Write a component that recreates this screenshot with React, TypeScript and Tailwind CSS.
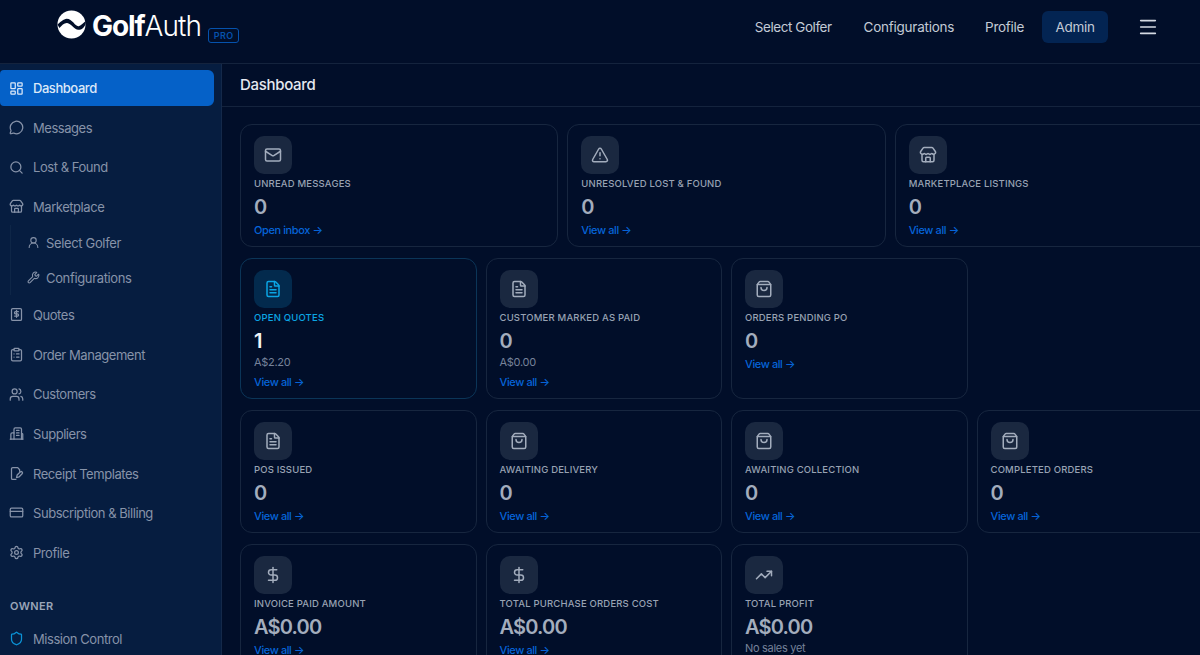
import { ReactNode } from "react";
import {
  CreditCard,
  DollarSign,
  FileText,
  ClipboardList,
  LayoutDashboard,
  Mail,
  Menu,
  MessageCircle,
  Search,
  Settings,
  Shield,
  ShoppingBag,
  Store,
  TrendingUp,
  TriangleAlert,
  UserRound,
  Users,
  Wrench,
} from "lucide-react";

const font = { fontFamily: "Inter, sans-serif" };

function QuoteIcon({ className }: { className?: string }) {
  return (
    <svg viewBox="0 0 24 24" fill="none" stroke="currentColor" strokeWidth="2" strokeLinecap="round" strokeLinejoin="round" className={className}>
      <rect x="4" y="2.5" width="16" height="19" rx="2" />
      <path d="M15 7.5h-4.5a1.75 1.75 0 0 0 0 3.5h3a1.75 1.75 0 0 1 0 3.5H9" />
      <path d="M12 5.5v11" />
    </svg>
  );
}

function SupplierIcon({ className }: { className?: string }) {
  return (
    <svg viewBox="0 0 24 24" fill="none" stroke="currentColor" strokeWidth="2" strokeLinecap="round" strokeLinejoin="round" className={className}>
      <path d="M8 21V5a2 2 0 0 1 2-2h8a2 2 0 0 1 2 2v16" />
      <path d="M8 11H5a2 2 0 0 0-2 2v8" />
      <path d="M20 12h1a1 1 0 0 1 1 1v8" />
      <path d="M2 21h20" />
      <path d="M12 7h4M12 11h4M12 15h4" />
    </svg>
  );
}

function ReceiptTemplateIcon({ className }: { className?: string }) {
  return (
    <svg viewBox="0 0 24 24" fill="none" stroke="currentColor" strokeWidth="2" strokeLinecap="round" strokeLinejoin="round" className={className}>
      <path d="M17 8.5V6l-3-3.5H6a2 2 0 0 0-2 2v15a2 2 0 0 0 2 2h5" />
      <path d="M21 12.5a2 2 0 0 0-3-3l-5 5-1 4 4-1z" />
    </svg>
  );
}

function Logo() {
  return (
    <svg viewBox="0 0 30 30" className="w-[29px] h-[29px] shrink-0">
      <circle cx="15" cy="15" r="14.5" fill="#ffffff" />
      <path d="M0.5 15 C3 13 7 9 10 9 C13 9 15 11 17 13 C19 15.5 21 17.5 23 16.5 C25 15.5 27 13.5 30 11 L29.5 15 C28 18 26 20.5 22 20.5 C18 20.5 14.5 14 10.5 13.5 C7.5 13.2 5 16 2.5 18.5 Z" fill="#010e29" />
    </svg>
  );
}

function NavItem({ icon, label, active }: { icon: ReactNode; label: string; active?: boolean }) {
  return (
    <div
      className={`h-9 w-[214px] flex items-center gap-[9px] pl-[9px] rounded-r-md rounded-l-sm text-[13px] mb-[3.6px] ${
        active ? "bg-[#0561c8] text-[#dce8f8] font-medium" : "text-[#8793a9]"
      }`}
    >
      {icon}
      <span className="mt-[2px] tracking-[-0.45px]">{label}</span>
    </div>
  );
}

const iconCls = "w-[15px] h-[15px] shrink-0";

function SubItem({ icon, label }: { icon: ReactNode; label: string }) {
  return (
    <div className="h-[35px] flex items-center gap-[6px] pl-[16px] text-[13px] text-[#8793a9]">
      {icon}
      <span className="mt-[2px] tracking-[-0.35px]">{label}</span>
    </div>
  );
}

function Sidebar() {
  return (
    <aside className="w-[222px] shrink-0 bg-[#061d40] border-r border-[#14294a] pt-1.5 overflow-hidden">
      <NavItem active icon={<LayoutDashboard className={iconCls} />} label="Dashboard" />
      <NavItem icon={<MessageCircle className={iconCls} />} label="Messages" />
      <NavItem icon={<Search className={iconCls} />} label="Lost & Found" />
      <NavItem icon={<Store className={iconCls} />} label="Marketplace" />
      <div className="ml-[10px] border-l border-[#0e2647] mb-[1.5px] -mt-[3px]">
        <SubItem icon={<UserRound className="w-[13px] h-[13px] shrink-0" />} label="Select Golfer" />
        <SubItem icon={<Wrench className="w-[13px] h-[13px] shrink-0" />} label="Configurations" />
      </div>
      <NavItem icon={<QuoteIcon className={iconCls} />} label="Quotes" />
      <NavItem icon={<ClipboardList className={iconCls} />} label="Order Management" />
      <NavItem icon={<Users className={iconCls} />} label="Customers" />
      <NavItem icon={<SupplierIcon className={iconCls} />} label="Suppliers" />
      <NavItem icon={<ReceiptTemplateIcon className={iconCls} />} label="Receipt Templates" />
      <NavItem icon={<CreditCard className={iconCls} />} label="Subscription & Billing" />
      <NavItem icon={<Settings className={iconCls} />} label="Profile" />
      <div className="pl-[10px] mt-[28px] mb-[6px] text-[11px] font-semibold tracking-[0.4px] text-[#9aa5b8]">OWNER</div>
      <NavItem icon={<Shield className={`${iconCls} text-[#0b93d6]`} />} label="Mission Control" />
    </aside>
  );
}

type CardProps = {
  icon: ReactNode;
  label: string;
  value: string;
  sub?: string;
  link?: string;
  highlight?: boolean;
};

function Card({ icon, label, value, sub, link, highlight }: CardProps) {
  return (
    <div className={`rounded-xl border px-[13px] pt-[11px] ${highlight ? "border-[#0b3558]" : "border-[#17263f]"}`}>
      <div
        className={`w-[38px] h-[38px] rounded-[10px] flex items-center justify-center ${
          highlight ? "bg-[#032a4d] text-[#0ba5e4]" : "bg-[#1a2840] text-[#a3adbd]"
        }`}
      >
        {icon}
      </div>
      <div className={`mt-[3px] text-[9.5px] leading-[14px] font-medium tracking-[0.18px] ${highlight ? "text-[#0ba5e4]" : "text-[#98a2b3]"}`}>
        {label}
      </div>
      <div className={`mt-[2px] text-[20px] leading-[28px] font-semibold tracking-[-0.8px] ${highlight ? "text-[#f1f5f9]" : "text-[#a3adbd]"}`}>
        {value}
      </div>
      {sub && <div className="mt-[-1px] text-[11px] leading-[16px] tracking-[-0.3px] text-[#76829a]">{sub}</div>}
      {link && (
        <div className={`${sub ? "mt-[4px]" : "mt-[1px]"} text-[11px] leading-[16px] font-medium tracking-[-0.4px] text-[#0664d8]`}>
          {link} →
        </div>
      )}
    </div>
  );
}

const ci = "w-[18px] h-[18px]";

export default function App() {
  return (
    <div style={font} className="h-[655px] w-[1200px] overflow-hidden bg-[#010e29] flex flex-col">
      <header className="h-[64px] shrink-0 border-b border-[#14233d] flex items-start pl-[57px] pr-[41px]">
        <div className="flex items-start pt-[10px]">
          <Logo />
          <span className="ml-[6px] mt-[1px] text-[28px] leading-[30px] tracking-[-1.1px] text-white font-bold">Golf</span>
          <span className="mt-[1px] text-[28px] leading-[30px] tracking-[-0.9px] text-white font-light">Auth</span>
          <span className="ml-[7px] mt-[18px] h-[15px] w-[31px] text-center rounded-[3px] border border-[#0552ad] text-[#0552ad] text-[9px] leading-[13px] font-semibold tracking-[0.4px]">PRO</span>
        </div>
        <nav className="ml-auto flex items-center text-[13.5px] text-[#c3cad6] pt-[11px]">
          <span className="tracking-[-0.45px]">Select Golfer</span>
          <span className="ml-[32px] tracking-[-0.25px]">Configurations</span>
          <span className="ml-[31px] tracking-[-0.3px]">Profile</span>
          <span className="ml-[18px] h-8 w-[66px] justify-center rounded-md bg-[#032452] flex items-center tracking-[-0.3px]">Admin</span>
          <Menu className="ml-[29px] w-[22px] h-[22px] text-[#d5dae3]" strokeWidth={1.75} />
        </nav>
      </header>

      <div className="flex flex-1 min-h-0">
        <Sidebar />
        <main className="flex-1 min-w-0 overflow-hidden">
          <div className="h-[43px] border-b border-[#14233d] flex items-center pl-[18px] text-[15px] font-medium text-[#e5e9f0] tracking-[-0.3px]">
            Dashboard
          </div>
          <div className="w-[973px] ml-[18px] mt-[17px] flex flex-col gap-[11px]">
            <div className="grid grid-cols-3 gap-[9px] h-[123px]">
              <Card icon={<Mail className={ci} />} label="UNREAD MESSAGES" value="0" link="Open inbox" />
              <Card icon={<TriangleAlert className={ci} />} label="UNRESOLVED LOST & FOUND" value="0" link="View all" />
              <Card icon={<Store className={ci} />} label="MARKETPLACE LISTINGS" value="0" link="View all" />
            </div>
            <div className="grid grid-cols-4 gap-[9px] h-[141px]">
              <Card highlight icon={<FileText className={ci} />} label="OPEN QUOTES" value="1" sub="A$2.20" link="View all" />
              <Card icon={<FileText className={ci} />} label="CUSTOMER MARKED AS PAID" value="0" sub="A$0.00" link="View all" />
              <Card icon={<ShoppingBag className={ci} />} label="ORDERS PENDING PO" value="0" link="View all" />
            </div>
            <div className="grid grid-cols-4 gap-[9px] h-[123px]">
              <Card icon={<FileText className={ci} />} label="POS ISSUED" value="0" link="View all" />
              <Card icon={<ShoppingBag className={ci} />} label="AWAITING DELIVERY" value="0" link="View all" />
              <Card icon={<ShoppingBag className={ci} />} label="AWAITING COLLECTION" value="0" link="View all" />
              <Card icon={<ShoppingBag className={ci} />} label="COMPLETED ORDERS" value="0" link="View all" />
            </div>
            <div className="grid grid-cols-4 gap-[9px] h-[123px]">
              <Card icon={<DollarSign className={ci} />} label="INVOICE PAID AMOUNT" value="A$0.00" link="View all" />
              <Card icon={<DollarSign className={ci} />} label="TOTAL PURCHASE ORDERS COST" value="A$0.00" link="View all" />
              <Card icon={<TrendingUp className={ci} />} label="TOTAL PROFIT" value="A$0.00" sub="No sales yet" />
            </div>
          </div>
        </main>
      </div>
    </div>
  );
}
